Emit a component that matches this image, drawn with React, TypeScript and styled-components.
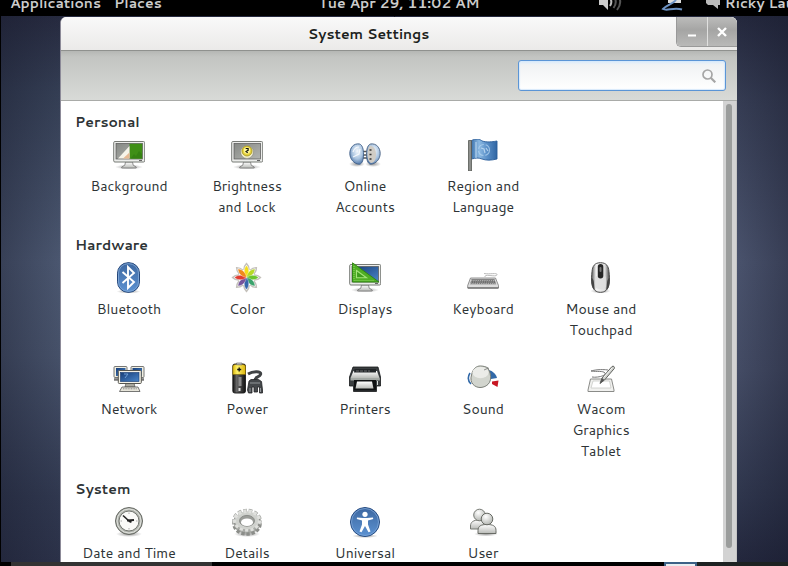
import React from 'react';
import styled, { createGlobalStyle } from 'styled-components';

const GlobalStyle = createGlobalStyle`
  * { box-sizing: border-box; }
  body {
    margin: 0;
    background: #000;
    color: #2e3436;
    font: 14px/21px Cantarell, "Noto Sans", "Open Sans", sans-serif;
  }
  button, input { font: inherit; color: inherit; }
`;

const Screen = styled.div`
  display: flex;
  flex-direction: column;
  height: 100vh;
  overflow: hidden;
`;

const TopBar = styled.header`
  display: grid;
  grid-template-columns: minmax(0, 2fr) minmax(0, 1fr) minmax(0, 2fr);
  align-content: end;
  flex: none;
  height: 16px;
  padding: 0 0 3px 10px;
  overflow: hidden;
  background: #000;
  color: #ccc;
  font-weight: 700;
`;

const BarGroup = styled.nav<{ $end?: boolean }>`
  display: flex;
  gap: ${(p) => (p.$end ? '22px' : '13px')};
  padding-left: ${(p) => (p.$end ? '121px' : '0')};
  min-width: 0;
`;

const BarButton = styled.button`
  display: flex;
  align-items: center;
  justify-content: center;
  gap: 5px;
  flex: none;
  border: 0;
  padding: 0;
  background: none;
  line-height: 20px;
  white-space: nowrap;
`;

const BarIcon = styled(BarButton)<{ $wide?: boolean }>`
  justify-content: flex-start;
  width: ${(p) => (p.$wide ? '40px' : '24px')};
`;

const Desktop = styled.main`
  display: flex;
  flex: 1;
  min-height: 0;
  padding: 0 51px 0 59px;
  border-left: 1px solid #000;
  background:
    linear-gradient(to right, rgba(20, 22, 40, .35), transparent 60px, transparent calc(100% - 52px), rgba(20, 22, 40, .35)),
    linear-gradient(to bottom, #262a3f 0%, #343e54 14%, #4b5770 45%, #465169 62%, #30384f 88%, #2b3148 100%) left / 50% 100% no-repeat,
    linear-gradient(to bottom, #24283d 0%, #363d54 16%, #4a536d 45%, #444c65 65%, #2f364d 88%, #23273d 100%) right / 50% 100% no-repeat;
`;

const Window = styled.section`
  display: flex;
  flex-direction: column;
  flex: 1;
  min-width: 0;
  margin-top: 1px;
  border-left: 1px solid #8c8a98;
  border-radius: 6px 6px 0 0;
  overflow: hidden;
  background: #fff;
`;

const TitleBar = styled.div`
  display: grid;
  grid-template-columns: 1fr 61px;
  flex: none;
  height: 34px;
  border-bottom: 1px solid #8f918e;
  background: linear-gradient(#f9f9f9, #ebeae9);
`;

const Title = styled.h1`
  margin: 0;
  color: #1c1f20;
  font-size: 14px;
  line-height: 34px;
  text-align: center;
`;

const WindowButtons = styled.div`
  display: flex;
  height: 30px;
  border: 1px solid #999;
  border-width: 0 0 1px 1px;
  border-radius: 0 0 0 5px;
  overflow: hidden;
`;

const WindowButton = styled.button`
  flex: 1;
  display: flex;
  align-items: center;
  justify-content: center;
  border: 0;
  padding: 0;
  background: linear-gradient(#bcbcbb, #a5a5a4 45%, #b9b9b8);

  & + & { border-left: 1px solid #e0e0df; }
`;

const Toolbar = styled.div`
  display: flex;
  justify-content: flex-end;
  align-items: center;
  flex: none;
  height: 50px;
  padding: 0 11px;
  border-bottom: 1px solid #a9aba8;
  background: linear-gradient(#b5b7b4, #c3c5c2 6px, #d8dad7);
`;

const SearchBox = styled.label`
  display: flex;
  align-items: center;
  width: 208px;
  height: 31px;
  padding: 0 9px;
  border: 1px solid #5b95d6;
  border-radius: 3px;
  background: linear-gradient(#dcecfb, #f1f3f4 4px, #fff);
  box-shadow: inset 0 0 1px 1px #d8e9fb;
`;

const SearchInput = styled.input`
  flex: 1;
  min-width: 0;
  border: 0;
  padding: 0;
  outline: 0;
  background: none;
`;

const Body = styled.div`
  display: flex;
  flex: 1;
  min-height: 0;
`;

const Panel = styled.div`
  flex: 1;
  min-width: 0;
  overflow: hidden;
  padding: 11px 9px 0;
`;

const Category = styled.section`
  margin-bottom: 17px;
`;

const CategoryTitle = styled.h2`
  margin: 0 5px 7px;
  font-size: 14px;
  line-height: 20px;
`;

const Grid = styled.div`
  display: grid;
  grid-template-columns: repeat(auto-fill, 118px);
  row-gap: 21px;
`;

const Item = styled.button`
  display: flex;
  flex-direction: column;
  align-items: center;
  justify-content: flex-start;
  gap: 5px;
  border: 0;
  padding: 0;
  background: none;
`;

const Line = styled.span`
  display: block;
  line-height: 21px;
  white-space: nowrap;
`;

const Scrollbar = styled.div`
  flex: none;
  width: 14px;
  padding: 3px 4px 14px 3px;
  border-right: 1px solid #c4c4c4;
  background: #d3d3d3;
`;

const Thumb = styled.div`
  height: 100%;
  border-radius: 4px;
  background: #9b9d9c;
`;

const BottomBar = styled.footer`
  display: flex;
  flex: none;
  height: 4px;
  padding-left: 11px;
  background: #000;
`;

const Task = styled.div`
  width: 201px;
  background: #333;
`;

const Workspace = styled.div`
  width: 33px;
  margin-left: auto;
  border: 2px solid #3c6186;
  border-bottom: 0;
  background: #e8edf0;
`;

const Tray = styled.div`
  width: 91px;
  background: #1d2222;
`;

const Gradients = () => (
  <svg width="0" height="0" display="block" aria-hidden="true">
    <defs>
      <linearGradient id="metal" x1="0" y1="0" x2="0" y2="1"><stop stopColor="#fff" /><stop offset="1" stopColor="#b9bbb7" /></linearGradient>
      <linearGradient id="gray" x1="0" y1="0" x2="1" y2="1"><stop stopColor="#868985" /><stop offset="1" stopColor="#b3b5b1" /></linearGradient>
      <linearGradient id="blue" x1="0" y1="0" x2="0" y2="1"><stop stopColor="#3d67a0" /><stop offset="1" stopColor="#5c92d2" /></linearGradient>
      <linearGradient id="screen" x1="0" y1="0" x2="1" y2="1"><stop stopColor="#173d78" /><stop offset="1" stopColor="#4a86ca" /></linearGradient>
      <linearGradient id="flag" x1="0" y1="0" x2="1" y2="0"><stop stopColor="#3f75af" /><stop offset=".3" stopColor="#8cb9e2" /><stop offset=".6" stopColor="#5b90c8" /><stop offset="1" stopColor="#2f65a3" /></linearGradient>
      <linearGradient id="side" x1="0" y1="0" x2="1" y2="0"><stop stopColor="#555" /><stop offset=".25" stopColor="#f2f2f2" /><stop offset=".75" stopColor="#ddd" /><stop offset="1" stopColor="#444" /></linearGradient>
      <linearGradient id="black" x1="0" y1="0" x2="1" y2="0"><stop stopColor="#111" /><stop offset=".3" stopColor="#666" /><stop offset="1" stopColor="#111" /></linearGradient>
      <linearGradient id="gold" x1="0" y1="0" x2="1" y2="0"><stop stopColor="#dcb80e" /><stop offset=".35" stopColor="#fff36a" /><stop offset="1" stopColor="#dcb40c" /></linearGradient>
      <radialGradient id="ball" cx=".4" cy=".3" r=".8"><stop stopColor="#fff" /><stop offset="1" stopColor="#aaada8" /></radialGradient>
      <radialGradient id="plug" cx=".55" cy=".35" r=".65"><stop stopColor="#f4f9fe" /><stop offset=".6" stopColor="#a9c3df" /><stop offset="1" stopColor="#557bab" /></radialGradient>
      <radialGradient id="shade"><stop stopColor="#000" stopOpacity=".4" /><stop offset="1" stopColor="#000" stopOpacity="0" /></radialGradient>
    </defs>
  </svg>
);

const Icon = ({ children }: { children: React.ReactNode }) => (
  <svg width="32" height="32" viewBox="0 0 32 32" display="block" aria-hidden="true">{children}</svg>
);

const Monitor = ({ fill }: { fill: string }) => (
  <>
    <ellipse cx="16" cy="28" rx="14" ry="2.500" fill="url(#shade)" />
    <path d="M12.500 23h7l.7 3.200 3 1.800v1h-14.500v-1l3.100-1.800z" fill="url(#metal)" stroke="#777" strokeWidth=".8" />
    <rect x=".7" y="2.500" width="31" height="20.500" rx="1.200" fill="#ecedeb" stroke="#777a75" />
    <rect x="3" y="4.500" width="26.500" height="15.500" fill={fill} stroke="#555" strokeWidth=".7" />
    <path d="M26 21.500h3" stroke="#666" />
  </>
);

const BackgroundIcon = () => (
  <Icon>
    <Monitor fill="url(#gray)" />
    <path d="M16.500 4.800h12.700v15H16.500z" fill="#3f8f16" />
    <path d="M18 19l3-4 2 2 3-5 3 3v4.500H18z" fill="#2f7a10" opacity=".6" />
    <path d="M5 19.500L16.500 7v12.500z" fill="#f6f4ea" />
    <path d="M10 19.500l6.500-6v6z" fill="#e6b994" />
  </Icon>
);

const BrightnessIcon = () => (
  <Icon>
    <Monitor fill="url(#gray)" />
    <circle cx="16" cy="13" r="6.400" fill="#f7f3cf" stroke="#777" strokeWidth=".5" />
    <circle cx="16" cy="12" r="5" fill="#e6d23c" stroke="#92840f" strokeWidth=".7" />
    <circle cx="16" cy="11.500" r="3.200" fill="#fff693" />
    <path d="M14.700 9.500h2.400v1.800l-2 1.200 1.600 1.200" fill="none" stroke="#111" strokeWidth="1.200" />
  </Icon>
);

const AccountsIcon = () => (
  <Icon>
    <ellipse cx="8" cy="25" rx="8" ry="3" fill="url(#shade)" />
    <ellipse cx="24" cy="25" rx="8" ry="3" fill="url(#shade)" />
    <path d="M13 12.500h6M13 16h6M13 19h6" stroke="#555" strokeWidth="1.400" />
    <path d="M10.500 5C4.500 4 .8 9 .8 14.500S5 25 10.500 25.300c3-.8 4-5 4-10S13.500 6 10.500 5z" fill="url(#plug)" stroke="#405f88" strokeWidth=".9" />
    <path d="M4 13c1-3 3-5 6-5M4 18l6-3 1-5" fill="none" stroke="#fff" strokeWidth="1.200" opacity=".8" />
    <path d="M21.500 5c6-1 9.700 4 9.700 9.500S27 25 21.500 25.300c-3-.8-4-5-4-10S18.500 6 21.500 5z" fill="url(#plug)" stroke="#4b6383" strokeWidth=".9" />
    <path d="M21.500 6.500c3.500 1 5.500 4 5.500 9s-1.500 8-5 8.500c-2.500-1-3.500-4.500-3.500-8.500s.8-8 3-9z" fill="#d0ccc5" />
    <path d="M20.500 11h2M20.500 15.500h2M20.500 20h2" stroke="#333" strokeWidth="1.500" />
  </Icon>
);

const RegionIcon = () => (
  <Icon>
    <path d="M4.500 1.500c4-2 8-1.500 10 0s8 2 15.500.5v18c-6 1.500-11 1.500-15 0s-6-1-10.500 0z" fill="url(#flag)" stroke="#285b98" strokeWidth=".9" />
    <circle cx="17" cy="11" r="5.500" fill="none" stroke="#b5d5f2" strokeWidth="1.200" strokeDasharray="7 2" opacity=".7" />
    <path d="M14 9l3 1 1 4M19 9l2 3M9 3v16" fill="none" stroke="#c5def5" strokeWidth="1.200" opacity=".8" />
    <path d="M1.500 1.500h3V32h-3z" fill="#8d8f8c" stroke="#565854" strokeWidth=".8" />
  </Icon>
);

const BluetoothIcon = () => (
  <Icon>
    <ellipse cx="15.500" cy="29.500" rx="12" ry="2" fill="url(#shade)" />
    <rect x="4.500" y=".7" width="22" height="29.600" rx="10.500" fill="url(#blue)" stroke="#24477b" />
    <rect x="5.500" y="1.700" width="20" height="27.600" rx="9.500" fill="none" stroke="#86acd9" strokeWidth=".8" />
    <path d="M9.500 10l11.500 10-6 6V5l6 6-11.500 10" fill="none" stroke="#fff" strokeWidth="1.900" />
  </Icon>
);

const PETALS = ['#f5de18', '#b6d927', '#6bc52c', '#3aa36c', '#3566ab', '#76549b', '#e23b30', '#f08a1d'];

const ColorIcon = () => (
  <Icon>
    {PETALS.map((c, i) => (
      <path key={c} transform={`rotate(${i * 45} 15.500 15.500)`} d="M15.500 15.500c-3.500-6-3.500-10.500 0-14 3.500 3.500 3.500 8 0 14z" fill="#fff" stroke="#c4c1bb" strokeWidth="1.400" />
    ))}
    <circle cx="15.500" cy="15.500" r="8" fill="#fff" />
    {PETALS.map((c, i) => (
      <path key={c} transform={`rotate(${i * 45} 15.500 15.500)`} d="M15.500 15.500c-3-4-3-8.500 0-12 3 3.500 3 8 0 12z" fill={c} stroke="#fff" strokeWidth=".3" />
    ))}
  </Icon>
);

const DisplaysIcon = () => (
  <Icon>
    <Monitor fill="url(#screen)" />
    <path d="M3.500.8V20H30z" fill="#4fae25" stroke="#2f8210" strokeWidth=".9" />
    <path d="M7.500 8.500l10 7.200h-10z" fill="#3f9d1d" stroke="#a4e47a" strokeWidth="1.100" />
    <path d="M5 4v14.500h20" fill="none" stroke="#93dd62" strokeWidth=".9" strokeDasharray="1 1" />
  </Icon>
);

const KeyboardIcon = () => (
  <Icon>
    <path d="M18 15c-1-4 12 1 12-2.500 0-2-7 0-13-1" fill="none" stroke="#bbb" />
    <path d="M3.500 16h25l3 7.500V26H.7v-2.500z" fill="#ddd" stroke="#777" strokeWidth=".8" />
    <path d="M4.500 17.200h23l1.700 5.100H3z" fill="#666" />
    <path d="M4 18.500h24M3.500 20h25M3 21.500h26" stroke="#ccc" strokeWidth=".7" strokeDasharray="1.500 .7" />
    <path d="M.8 26h30.600" stroke="#555" />
  </Icon>
);

const MouseIcon = () => (
  <Icon>
    <ellipse cx="15.500" cy="29" rx="10" ry="2.500" fill="url(#shade)" />
    <path d="M15.500.7c6 0 8 3.500 8.500 9 .3 4 1 8 0 13-1 5-4 7.600-8.500 7.600s-7.500-2.600-8.500-7.600c-1-5-.3-9 0-13 .5-5.500 2.500-9 8.500-9z" fill="url(#side)" stroke="#4d4d4d" />
    <path d="M7 16c3 3 1.500 8 3 12-3-2-4-6-3-12zM24 16c-3 3-1.500 8-3 12 3-2 4-6 3-12z" fill="#444" />
    <path d="M10 15c3-2 8-2 11 0v10c-3 3-8 3-11 0z" fill="#ddd" opacity=".8" />
    <rect x="12.800" y="2" width="5.500" height="14.500" rx="2.700" fill="#262626" />
    <rect x="14.500" y="5" width="2" height="5" rx="1" fill="#777" />
  </Icon>
);

const NetworkIcon = () => (
  <Icon>
    <path d="M1 17.500h8M23 17.500h8" stroke="#777" strokeWidth="2.500" />
    <rect x="1" y="4.500" width="13" height="11" rx="1" fill="#f1efe2" stroke="#555" strokeWidth=".8" />
    <rect x="3" y="6" width="9.500" height="8" fill="url(#screen)" />
    <rect x="18" y="4.500" width="13" height="11" rx="1" fill="#f1efe2" stroke="#555" strokeWidth=".8" />
    <rect x="19.500" y="6" width="9.500" height="8" fill="url(#screen)" />
    <path d="M13 21h8l1 4h-10z" fill="#aaa99f" stroke="#555" strokeWidth=".7" />
    <rect x="5.300" y="8.500" width="23" height="13" rx="1" fill="#f4f2e7" stroke="#55554f" />
    <rect x="7.500" y="10.500" width="18.500" height="9" fill="url(#screen)" stroke="#12366e" strokeWidth=".6" />
    <path d="M11 12h4l-3 4" fill="none" stroke="#6f9ed5" />
    <path d="M9 25h16l2 4.500H6.500z" fill="#e7e5da" stroke="#555" strokeWidth=".8" />
    <path d="M10 26.800h14" stroke="#888" strokeDasharray="1 .6" />
  </Icon>
);

const PowerIcon = () => (
  <Icon>
    <ellipse cx="8" cy="30" rx="8" ry="2" fill="url(#shade)" />
    <rect x="1.800" y="2" width="12.700" height="29" rx="2" fill="url(#black)" stroke="#111" strokeWidth=".8" />
    <path d="M1.800 12.500V4c0-2.500 12.700-2.500 12.700 0v8.500z" fill="url(#gold)" stroke="#7b6205" strokeWidth=".6" />
    <path d="M5.500 1h5.500v1.800H5.500z" fill="#ccc" stroke="#555" strokeWidth=".6" />
    <path d="M8.200 5.500v4M6.200 7.500h4" stroke="#111" strokeWidth="1.300" />
    <path d="M7.500 15h3v9h-3z" fill="#8b8b8b" />
    <path d="M7.500 26h2v3h-2z" fill="#ddd" />
    <path d="M17 12c5-3 14-3 12.500.5-1 3-6 2-6 6.500" fill="none" stroke="#3f4244" strokeWidth="3" />
    <path d="M18 19l2-1.500h7.500l3 2 1 8.500v3h-3v-6h-2v5h-3.500v-5h-2v6h-3.500l-1-3z" fill="#45484b" stroke="#232527" strokeWidth=".8" />
    <path d="M19 21h10M19 26v4M29.500 26v4" stroke="#92969a" />
  </Icon>
);

const PrinterIcon = () => (
  <Icon>
    <path d="M4 5h25l2.500 10v9h-4v5.500h-23V24H.5v-9z" fill="#3a3e40" stroke="#16191a" strokeWidth=".8" />
    <path d="M4.500 9h23.500l2.500 7H1.500z" fill="url(#metal)" />
    <path d="M5.500 7h21.500v3.500H5z" fill="#222628" />
    <path d="M7 9h14" stroke="#888" strokeWidth=".7" strokeDasharray="3 1" />
    <path d="M1.500 16h29.300v2.500H1.500z" fill="#a3a8a4" />
    <path d="M5 18h22v10.500H5z" fill="#0f1112" />
    <path d="M8 19.500h15l1.500 7H6.500z" fill="url(#metal)" />
    <path d="M28.500 19v4" stroke="#d7ddda" />
  </Icon>
);

const SoundIcon = () => (
  <Icon>
    <path d="M3 11c-2.500 4-2 8 1 11" fill="none" stroke="#3269a8" strokeWidth="1.600" />
    <path d="M21.500 8c4.500 1 7.500 4 8.500 8l-6 1z" fill="#3269a8" />
    <path d="M25 19.500l6.500-1-1 6.500-5.500-3z" fill="#c81723" />
    <path d="M21 6l2 5c3 11-5 14.500-10 14.500S2 21 4.500 13C6 6 10 4 13 4s5.500.5 8 2z" fill="#d2d5ce" stroke="#7b7f78" />
    <ellipse cx="13.500" cy="10.500" rx="8" ry="5.700" fill="#ebece8" />
    <path d="M17 8l4.500-2" stroke="#777" strokeWidth=".8" />
  </Icon>
);

const WacomIcon = () => (
  <Icon>
    <path d="M5.500 17h21l2.500 11v1.500H3V28z" fill="#f1f1ef" stroke="#8a8b88" />
    <path d="M8 19h16.500l1.500 7H6z" fill="#fff" stroke="#c9cac7" strokeWidth=".8" />
    <path d="M23 8c-7-1-14 0-17 1 6 1 12-.5 14 2s-8 5-13 4" fill="none" stroke="#777" />
    <path d="M15 21.500l2-5.500L27 4.500c1.500-1 3 .5 2.300 2L19.500 18z" fill="#cfd1cd" stroke="#61635f" />
    <path d="M15 21.500l2-5.500 2.500 2z" fill="#555" />
    <path d="M19 15l8-9" stroke="#fff" strokeWidth=".8" />
  </Icon>
);

const ClockIcon = () => (
  <Icon>
    <ellipse cx="16" cy="28" rx="13" ry="3" fill="url(#shade)" />
    <circle cx="16" cy="15" r="13.500" fill="#b1b4ae" stroke="#656862" />
    <circle cx="16" cy="15" r="12" fill="none" stroke="#dfe1dc" />
    <circle cx="16" cy="15" r="10" fill="#fafaf8" stroke="#747771" />
    <path d="M16 6.500v1.500M16 22v1.500M7.500 15H9M23 15h1.500" stroke="#aaa" />
    <path d="M10 9.500l6 5.500" stroke="#222" strokeWidth="1.600" />
    <path d="M14 14.500l7-.5M16 15l2.500 1" stroke="#222" strokeWidth="2" />
  </Icon>
);

const GearIcon = () => (
  <Icon>
    <ellipse cx="16" cy="28" rx="13" ry="3" fill="url(#shade)" />
    <ellipse cx="16" cy="18" rx="13" ry="10" fill="#a9aba7" stroke="#8b8d89" strokeWidth="3.500" strokeDasharray="3.300 1.800" />
    <ellipse cx="16" cy="14.500" rx="12" ry="9" fill="#c9cbc7" stroke="#a5a7a3" strokeWidth="5.500" strokeDasharray="3.400 1.700" />
    <ellipse cx="16" cy="14.500" rx="12" ry="9" fill="#cfd1cd" stroke="#dfe0dd" strokeWidth="4.300" strokeDasharray="3 2.100" />
    <ellipse cx="16" cy="15" rx="11" ry="8" fill="#cfd1cd" />
    <ellipse cx="16" cy="14.800" rx="7.500" ry="5.400" fill="#9b9d99" stroke="#7e807c" strokeWidth=".8" />
    <ellipse cx="16" cy="16.300" rx="6" ry="3.800" fill="#fff" />
  </Icon>
);

const UniversalIcon = () => (
  <Icon>
    <ellipse cx="16" cy="30" rx="13" ry="2" fill="url(#shade)" />
    <circle cx="16" cy="16" r="14.500" fill="url(#blue)" stroke="#244a80" />
    <circle cx="16" cy="16" r="13.500" fill="none" stroke="#7da6d8" strokeWidth=".8" />
    <circle cx="16" cy="8.300" r="2.600" fill="#fff" />
    <path d="M8 11.500l6 .5h4l6-.5.200 1.500-5.200 1.500v4l2.500 7-2 .7L16 20l-3.500 6.200-2-.7 2.500-7v-4L7.800 13z" fill="#fff" />
  </Icon>
);

const UsersIcon = () => (
  <Icon>
    <ellipse cx="19" cy="28" rx="12" ry="2.500" fill="url(#shade)" />
    <path d="M3.500 23v-3c0-4 3-6 8.500-6s8.500 2 8.500 6v3z" fill="url(#metal)" stroke="#777a74" />
    <circle cx="12.500" cy="9" r="5.800" fill="url(#ball)" stroke="#777a74" />
    <path d="M11 27.500v-3c0-4.500 3-6 9-6s9 1.500 9 6v3z" fill="url(#metal)" stroke="#686b65" />
    <circle cx="20" cy="13" r="5.800" fill="url(#ball)" stroke="#686b65" />
  </Icon>
);

type Entry = { lines: string[]; icon: React.ComponentType };

const CATEGORIES: { title: string; entries: Entry[] }[] = [
  {
    title: 'Personal',
    entries: [
      { lines: ['Background'], icon: BackgroundIcon },
      { lines: ['Brightness', 'and Lock'], icon: BrightnessIcon },
      { lines: ['Online', 'Accounts'], icon: AccountsIcon },
      { lines: ['Region and', 'Language'], icon: RegionIcon },
    ],
  },
  {
    title: 'Hardware',
    entries: [
      { lines: ['Bluetooth'], icon: BluetoothIcon },
      { lines: ['Color'], icon: ColorIcon },
      { lines: ['Displays'], icon: DisplaysIcon },
      { lines: ['Keyboard'], icon: KeyboardIcon },
      { lines: ['Mouse and', 'Touchpad'], icon: MouseIcon },
      { lines: ['Network'], icon: NetworkIcon },
      { lines: ['Power'], icon: PowerIcon },
      { lines: ['Printers'], icon: PrinterIcon },
      { lines: ['Sound'], icon: SoundIcon },
      { lines: ['Wacom', 'Graphics', 'Tablet'], icon: WacomIcon },
    ],
  },
  {
    title: 'System',
    entries: [
      { lines: ['Date and Time'], icon: ClockIcon },
      { lines: ['Details'], icon: GearIcon },
      { lines: ['Universal'], icon: UniversalIcon },
      { lines: ['User'], icon: UsersIcon },
    ],
  },
];

export default function App() {
  return (
    <Screen>
      <GlobalStyle />
      <Gradients />
      <TopBar>
        <BarGroup>
          <BarButton>Applications</BarButton>
          <BarButton>Places</BarButton>
        </BarGroup>
        <BarButton>Tue Apr 29, 11:02 AM</BarButton>
        <BarGroup $end>
          <BarIcon $wide aria-label="Volume">
            <svg width="24" height="20" viewBox="0 0 24 20" display="block">
              <path d="M1 6h4l5-5v16l-5-5H1z" fill="#ccc" />
              <path d="M12 5c2 3 2 5 0 8" fill="none" stroke="#bbb" strokeWidth="2" />
              <path d="M15.500 3c3 4 3 8 0 12M19 1c4 5 4 11 0 16" fill="none" stroke="#555" strokeWidth="2" />
            </svg>
          </BarIcon>
          <BarIcon aria-label="Network">
            <svg width="24" height="20" viewBox="0 0 24 20" display="block">
              <path d="M8 4h13v6H8z" fill="#ddd" />
              <path d="M16 7c-3 4-9 5-13 9 4 2.500 10-2 19 .5" fill="none" stroke="#6d93c4" strokeWidth="2" />
            </svg>
          </BarIcon>
          <BarButton>
            <svg width="14" height="20" viewBox="0 0 14 20" aria-hidden="true">
              <path d="M0 2h14v10h-2v4l-5-4H2l-2-2z" fill="#bbb" />
            </svg>
            Ricky Lau
          </BarButton>
        </BarGroup>
      </TopBar>
      <Desktop>
        <Window>
          <TitleBar>
            <Title>System Settings</Title>
            <WindowButtons>
              <WindowButton aria-label="Minimize">
                <svg width="8" height="10" viewBox="0 0 8 10"><path d="M0 8.500h8" stroke="#fff" strokeWidth="2" /></svg>
              </WindowButton>
              <WindowButton aria-label="Close">
                <svg width="10" height="10" viewBox="0 0 10 10"><path d="M1 1l8 8M9 1L1 9" stroke="#fff" strokeWidth="2.400" /></svg>
              </WindowButton>
            </WindowButtons>
          </TitleBar>
          <Toolbar>
            <SearchBox>
              <SearchInput type="text" aria-label="Search settings" />
              <svg width="14" height="14" viewBox="0 0 14 14" aria-hidden="true">
                <circle cx="5.500" cy="5.500" r="4.500" fill="none" stroke="#a5a5a5" strokeWidth="1.700" />
                <path d="M8.700 8.700l4.600 4.600" stroke="#a5a5a5" strokeWidth="2.200" />
              </svg>
            </SearchBox>
          </Toolbar>
          <Body>
            <Panel>
              {CATEGORIES.map((category) => (
                <Category key={category.title}>
                  <CategoryTitle>{category.title}</CategoryTitle>
                  <Grid>
                    {category.entries.map(({ lines, icon: Glyph }) => (
                      <Item key={lines[0]}>
                        <Glyph />
                        <span>{lines.map((line) => <Line key={line}>{line}</Line>)}</span>
                      </Item>
                    ))}
                  </Grid>
                </Category>
              ))}
            </Panel>
            <Scrollbar><Thumb /></Scrollbar>
          </Body>
        </Window>
      </Desktop>
      <BottomBar>
        <Task />
        <Workspace />
        <Tray />
      </BottomBar>
    </Screen>
  );
}
